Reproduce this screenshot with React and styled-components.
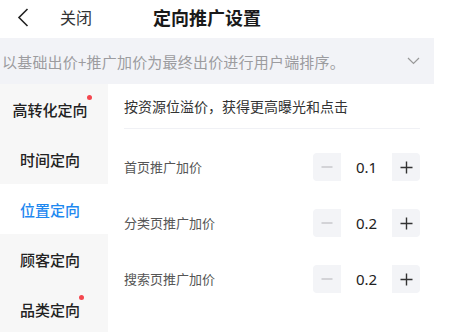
import React, { useState } from "react";
import styled, { createGlobalStyle } from "styled-components";

const GlobalStyle = createGlobalStyle`
  html, body {
    margin: 0;
    padding: 0;
    background: #ffffff;
  }
  body {
    font-family: "Noto Sans CJK SC", "Noto Sans", sans-serif;
    color: #333;
  }
`;

const Page = styled.div`
  width: 434px;
  height: 332px;
  overflow: hidden;
  background: #fff;
  display: flex;
  flex-direction: column;
`;

const Header = styled.div`
  height: 38px;
  display: flex;
  align-items: center;
  flex-shrink: 0;
`;

const BackBtn = styled.div`
  width: 20px;
  margin-left: 17px;
  display: flex;
  align-items: center;
  margin-top: -4px;
`;

const CloseText = styled.span`
  margin-left: 23px;
  font-size: 16px;
  color: #333;
  margin-top: -5px;
`;

const Title = styled.span`
  margin-left: 61px;
  font-size: 18px;
  font-weight: 700;
  color: #1a1a1a;
  margin-top: -5px;
`;

const Banner = styled.div`
  height: 46px;
  background: #f2f3f7;
  display: flex;
  align-items: center;
  justify-content: space-between;
  padding: 0 14px 0 2px;
  flex-shrink: 0;
`;

const BannerText = styled.span`
  font-size: 15px;
  color: #9c9c9f;
  white-space: nowrap;
  letter-spacing: 0.2px;
`;

const Body = styled.div`
  flex: 1;
  display: flex;
`;

const Sidebar = styled.div`
  width: 108px;
  background: #f7f7f7;
  display: flex;
  flex-direction: column;
`;

const NavItem = styled.div`
  height: 50px;
  display: flex;
  align-items: center;
  justify-content: center;
  padding-right: 8px;
  font-size: 15px;
  font-weight: 500;
  color: ${(p) => (p.$active ? "#1e88f0" : "#222")};
  background: ${(p) => (p.$active ? "#fff" : "transparent")};
`;

const NavLabel = styled.span`
  position: relative;
`;

const Dot = styled.i`
  position: absolute;
  right: -4px;
  top: -4px;
  width: 5px;
  height: 5px;
  border-radius: 50%;
  background: #f4474f;
`;

const Content = styled.div`
  flex: 1;
  padding: 0 14px 0 16px;
  display: flex;
  flex-direction: column;
`;

const Intro = styled.div`
  height: 44px;
  display: flex;
  align-items: center;
  font-size: 14px;
  color: #333;
  border-bottom: 1px solid #f0f1f5;
`;

const Rows = styled.div`
  display: flex;
  flex-direction: column;
  gap: 28px;
  margin-top: 24px;
`;

const Row = styled.div`
  height: 28px;
  display: flex;
  align-items: center;
  justify-content: space-between;
`;

const RowLabel = styled.span`
  font-size: 13px;
  color: #555;
  margin-top: -2px;
`;

const Stepper = styled.div`
  width: 107px;
  height: 28px;
  border-radius: 4px;
  overflow: hidden;
  display: flex;
  background: #f3f4f7;
`;

const StepBtn = styled.div`
  width: 28px;
  display: flex;
  align-items: center;
  justify-content: center;
`;

const StepValue = styled.div`
  width: 51px;
  background: #fff;
  display: flex;
  align-items: center;
  justify-content: center;
  font-family: "Noto Sans", "Open Sans", sans-serif;
  font-size: 15px;
  color: #222;
`;

const Minus = ({ color }) => (
  <svg width="12" height="12" viewBox="0 0 12 12">
    <path d="M0.5 6h11" stroke={color} strokeWidth="1.3" />
  </svg>
);

const Plus = ({ color }) => (
  <svg width="13" height="13" viewBox="0 0 13 13">
    <path d="M0.5 6.5h12M6.5 0.5v12" stroke={color} strokeWidth="1.4" />
  </svg>
);

const NAV = [
  { label: "高转化定向", dot: true },
  { label: "时间定向" },
  { label: "位置定向" },
  { label: "顾客定向" },
  { label: "品类定向", dot: true },
];

const PRICES = [
  { label: "首页推广加价", value: 0.1 },
  { label: "分类页推广加价", value: 0.2 },
  { label: "搜索页推广加价", value: 0.2 },
];

export default function App() {
  const [active, setActive] = useState(2);
  const [prices, setPrices] = useState(PRICES);

  const change = (i, d) => {
    setPrices((list) =>
      list.map((p, j) =>
        j === i ? { ...p, value: Math.max(0, Math.round((p.value + d) * 10) / 10) } : p
      )
    );
  };

  return (
    <Page>
      <GlobalStyle />
      <Header>
        <BackBtn>
          <svg width="12" height="19" viewBox="0 0 12 19">
            <path d="M10.5 1L2 9.5 10.5 18" fill="none" stroke="#222" strokeWidth="1.6" />
          </svg>
        </BackBtn>
        <CloseText>关闭</CloseText>
        <Title>定向推广设置</Title>
      </Header>
      <Banner>
        <BannerText>以基础出价+推广加价为最终出价进行用户端排序。</BannerText>
        <svg width="13" height="8" viewBox="0 0 13 8">
          <path d="M1 1l5.5 5.5L12 1" fill="none" stroke="#999" strokeWidth="1.2" />
        </svg>
      </Banner>
      <Body>
        <Sidebar>
          {NAV.map((n, i) => (
            <NavItem key={n.label} $active={i === active} onClick={() => setActive(i)}>
              <NavLabel>
                {n.label}
                {n.dot && <Dot />}
              </NavLabel>
            </NavItem>
          ))}
        </Sidebar>
        <Content>
          <Intro>按资源位溢价，获得更高曝光和点击</Intro>
          <Rows>
            {prices.map((p, i) => (
              <Row key={p.label}>
                <RowLabel>{p.label}</RowLabel>
                <Stepper>
                  <StepBtn onClick={() => change(i, -0.1)}>
                    <Minus color="#c8c9cc" />
                  </StepBtn>
                  <StepValue>{p.value.toFixed(1)}</StepValue>
                  <StepBtn onClick={() => change(i, 0.1)}>
                    <Plus color="#333" />
                  </StepBtn>
                </Stepper>
              </Row>
            ))}
          </Rows>
        </Content>
      </Body>
    </Page>
  );
}
